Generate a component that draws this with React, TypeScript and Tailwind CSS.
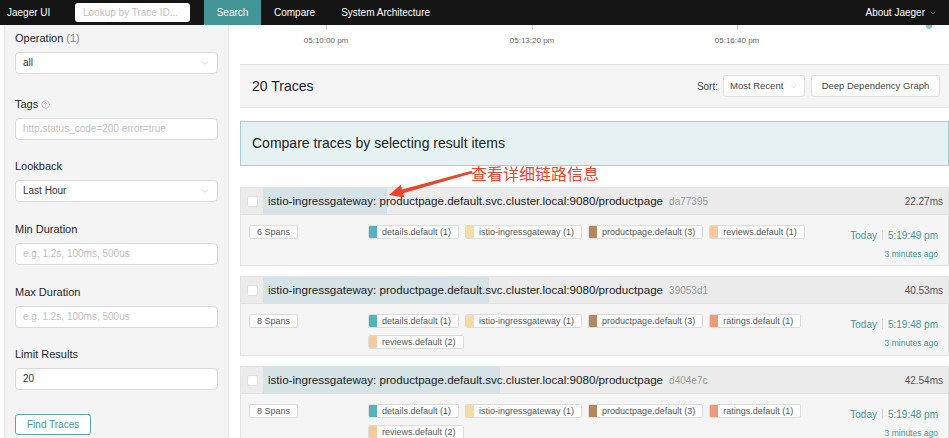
import { ChevronDown, CircleHelp } from "lucide-react";

type Svc = [string, string];
const DET: Svc = ["details.default (1)", "#52b4bd"];
const IST: Svc = ["istio-ingressgateway (1)", "#f5dba5"];
const PRD: Svc = ["productpage.default (3)", "#b3875f"];
const REV1: Svc = ["reviews.default (1)", "#f7c99e"];
const RAT: Svc = ["ratings.default (1)", "#ec9b7a"];
const REV2: Svc = ["reviews.default (2)", "#f7c99e"];

const traces = [
  { id: "da77395", dur: "22.27ms", bar: 124, spans: 6, services: [DET, IST, PRD, REV1], time: "5:19:49 pm" },
  { id: "39053d1", dur: "40.53ms", bar: 226, spans: 8, services: [DET, IST, PRD, RAT, REV2], time: "5:19:48 pm" },
  { id: "d404e7c", dur: "42.54ms", bar: 237, spans: 8, services: [DET, IST, PRD, RAT, REV2], time: "5:19:48 pm" },
];

function Field({ label, extra, children, cls }: { label: React.ReactNode; extra?: React.ReactNode; children: React.ReactNode; cls?: string }) {
  return (
    <div className={cls ?? "mb-[20px]"}>
      <div className="flex items-center h-[14px] text-[11px] leading-[14px] text-[#262626]">
        {label}
        {extra}
      </div>
      <div className="mt-[7px]">{children}</div>
    </div>
  );
}

function Box({ text, placeholder, select }: { text: string; placeholder?: boolean; select?: boolean }) {
  return (
    <div className="flex items-center h-[22px] bg-white border border-[#d9d9d9] rounded-[4px] pl-[7px] pr-[7px]">
      <span className={`text-[10px] leading-[12px] flex-1 ${placeholder ? "text-[#bfbfbf]" : "text-[#333]"}`}>{text}</span>
      {select && <ChevronDown size={10} strokeWidth={1.2} color="#bbbbbb" />}
    </div>
  );
}

function TraceCard({ t }: { t: (typeof traces)[number] }) {
  return (
    <div className="mb-[10px] border border-[#e3e3e3] bg-[#f5f5f5]">
      <div className="flex items-center h-[27px] bg-[#ebebeb] border-b border-[#e0e0e0]">
        <div className="w-[22px] h-full flex items-center pl-[6px]">
          <div className="w-[11px] h-[11px] bg-white border border-[#e0e0e0] rounded-[2px]" />
        </div>
        <div className="relative flex-1 h-full flex items-center">
          <div className="absolute left-0 top-0 bottom-0 bg-[#d5e3e7]" style={{ width: t.bar }} />
          <span className="relative pl-[5px] text-[11.6px] font-medium text-[#222] whitespace-nowrap">
            istio-ingressgateway: productpage.default.svc.cluster.local:9080/productpage
          </span>
          <span className="relative ml-[6px] text-[10px] text-[#999]">{t.id}</span>
          <span className="relative ml-auto pr-[5px] text-[10px] text-[#555]">{t.dur}</span>
        </div>
      </div>
      <div className="flex pl-[8px] pt-[10px] pb-[6px]">
        <div className="w-[119px] flex items-start">
          <span className="flex items-center h-[14px] px-[7px] bg-white border border-[#dcdcdc] rounded-[2px] text-[9px] leading-[12px] text-[#555]">
            {t.spans} Spans
          </span>
        </div>
        <div className="w-[440px] flex flex-wrap content-start gap-x-[6px] gap-y-[7px]">
          {t.services.map(([name, color], i) => (
            <div key={i} className="flex h-[14px] bg-white border border-[#dcdcdc] rounded-[2px] overflow-hidden">
              <div className="w-[8px]" style={{ backgroundColor: color }} />
              <span className="pl-[5px] pr-[7px] text-[9px] leading-[12px] text-[#555]">{name}</span>
            </div>
          ))}
        </div>
        <div className="ml-auto pr-[10px] flex flex-col items-end">
          <div className="flex items-center h-[20px] text-[10px] text-[#3f9696]">
            <span>Today</span>
            <span className="mx-[5px] w-px h-[10px] bg-[#d6d6d6]" />
            <span>{t.time}</span>
          </div>
          <div className="mt-[4px] h-[10px] leading-[10px] text-[8.5px] text-[#3f9696]">3 minutes ago</div>
        </div>
      </div>
    </div>
  );
}

export default function App() {
  return (
    <div className="relative w-[949px] h-[438px] overflow-hidden bg-white font-['Liberation_Sans',Arial,sans-serif] flex flex-col">
      {/* Nav */}
      <div className="h-[25px] bg-[#151515] flex items-center text-[10px] text-white shrink-0 relative z-10">
        <span className="pl-[7px] w-[75px]">Jaeger UI</span>
        <div className="w-[115px] h-[19px] bg-white rounded-[3px] flex items-center pl-[8px] text-[#bfbfbf]">
          Lookup by Trace ID...
        </div>
        <div className="ml-[14px] w-[57px] h-full bg-[#449696] flex items-center justify-center">Search</div>
        <span className="ml-[13px]">Compare</span>
        <span className="ml-[26px]">System Architecture</span>
        <div className="ml-auto pr-[12px] flex items-center gap-[4px]">
          <span>About Jaeger</span>
          <ChevronDown size={8} strokeWidth={1.5} color="#aaaaaa" />
        </div>
      </div>

      <div className="flex flex-1 min-h-0">
        {/* Left panel */}
        <div className="ml-[4px] w-[225px] bg-[#f4f4f4] border-x border-[#e6e6e6] pl-[10px] pr-[10px] pt-[6px]">
          <Field
            cls="mb-[23px]"
            label={
              <>
                Operation<span className="ml-[3px] text-[#888]">(1)</span>
              </>
            }
          >
            <Box text="all" select />
          </Field>
          <Field cls="mb-[19px]" label="Tags" extra={<CircleHelp size={9} strokeWidth={1.3} color="#999" className="ml-[3px]" />}>
            <Box text="http.status_code=200 error=true" placeholder />
          </Field>
          <Field label="Lookback">
            <Box text="Last Hour" select />
          </Field>
          <Field label="Min Duration">
            <Box text="e.g. 1.2s, 100ms, 500us" placeholder />
          </Field>
          <Field cls="mb-[19px]" label="Max Duration">
            <Box text="e.g. 1.2s, 100ms, 500us" placeholder />
          </Field>
          <Field label="Limit Results" cls="mb-[21px]">
            <Box text="20" />
          </Field>
          <div className="inline-flex items-center h-[21px] px-[11px] border border-[#5aa9a9] rounded-[3px] bg-white text-[10px] text-[#3f9696]">
            Find Traces
          </div>
        </div>

        {/* Right content */}
        <div className="flex-1 pl-[11px] min-w-0">
          {/* chart axis */}
          <div className="relative h-[39px] bg-white">
            <div className="flex h-full text-[8px] text-[#666] whitespace-nowrap">
              <div className="ml-[67px] w-[38px] flex flex-col items-center">
                <div className="w-px h-[5px] bg-[#ccc]" />
                <span className="mt-[5px]">05:10:00 pm</span>
              </div>
              <div className="ml-[168px] w-[38px] flex flex-col items-center">
                <div className="w-px h-[5px] bg-[#ccc]" />
                <span className="mt-[5px]">05:13:20 pm</span>
              </div>
              <div className="ml-[167px] w-[38px] flex flex-col items-center">
                <div className="w-px h-[5px] bg-[#ccc]" />
                <span className="mt-[5px]">05:16:40 pm</span>
              </div>
            </div>
            <div className="absolute right-[17px] top-[-2px] w-[6px] h-[6px] rounded-full bg-[#8cc7c9]" />
          </div>

          {/* header band */}
          <div className="h-[44px] bg-[#f5f5f5] border-y border-[#e6e6e6] flex items-center pl-[12px] pr-[9px]">
            <span className="text-[14px] text-[#222]">20 Traces</span>
            <span className="ml-auto text-[10px] text-[#444]">Sort:</span>
            <div className="ml-[5px] h-[22px] w-[82px] bg-white border border-[#e0e0e0] rounded-[3px] flex items-center pl-[6px] pr-[6px] text-[9.5px] text-[#444]">
              <span className="flex-1">Most Recent</span>
              <ChevronDown size={9} strokeWidth={1.2} color="#bbbbbb" />
            </div>
            <div className="ml-[6px] h-[22px] w-[129px] justify-center bg-white border border-[#e0e0e0] rounded-[3px] flex items-center text-[9.5px] text-[#444]">
              Deep Dependency Graph
            </div>
          </div>

          {/* compare box */}
          <div className="mt-[13px] h-[45px] bg-[#e6f2f2] border border-[#a7d0d0] flex items-center pl-[11px]">
            <span className="text-[14px] font-medium text-[#222]">Compare traces by selecting result items</span>
          </div>

          <div className="mt-[21px]">
            {traces.map((t) => (
              <TraceCard key={t.id} t={t} />
            ))}
          </div>
        </div>
      </div>

      {/* annotation */}
      <svg className="absolute left-0 top-0 pointer-events-none" width="949" height="438">
        <polygon
          points="471.6,170.8 402.0,189.4 400.6,184.8 389,195 404.6,197.6 403.0,193.2 472.4,173.2"
          fill="#e9442e"
        />
      </svg>
      <div className="absolute left-[471px] top-[163px] text-[16px] leading-[20px] text-[#e9442e] font-['Noto_Sans_CJK_SC',sans-serif]">
        查看详细链路信息
      </div>
    </div>
  );
}
